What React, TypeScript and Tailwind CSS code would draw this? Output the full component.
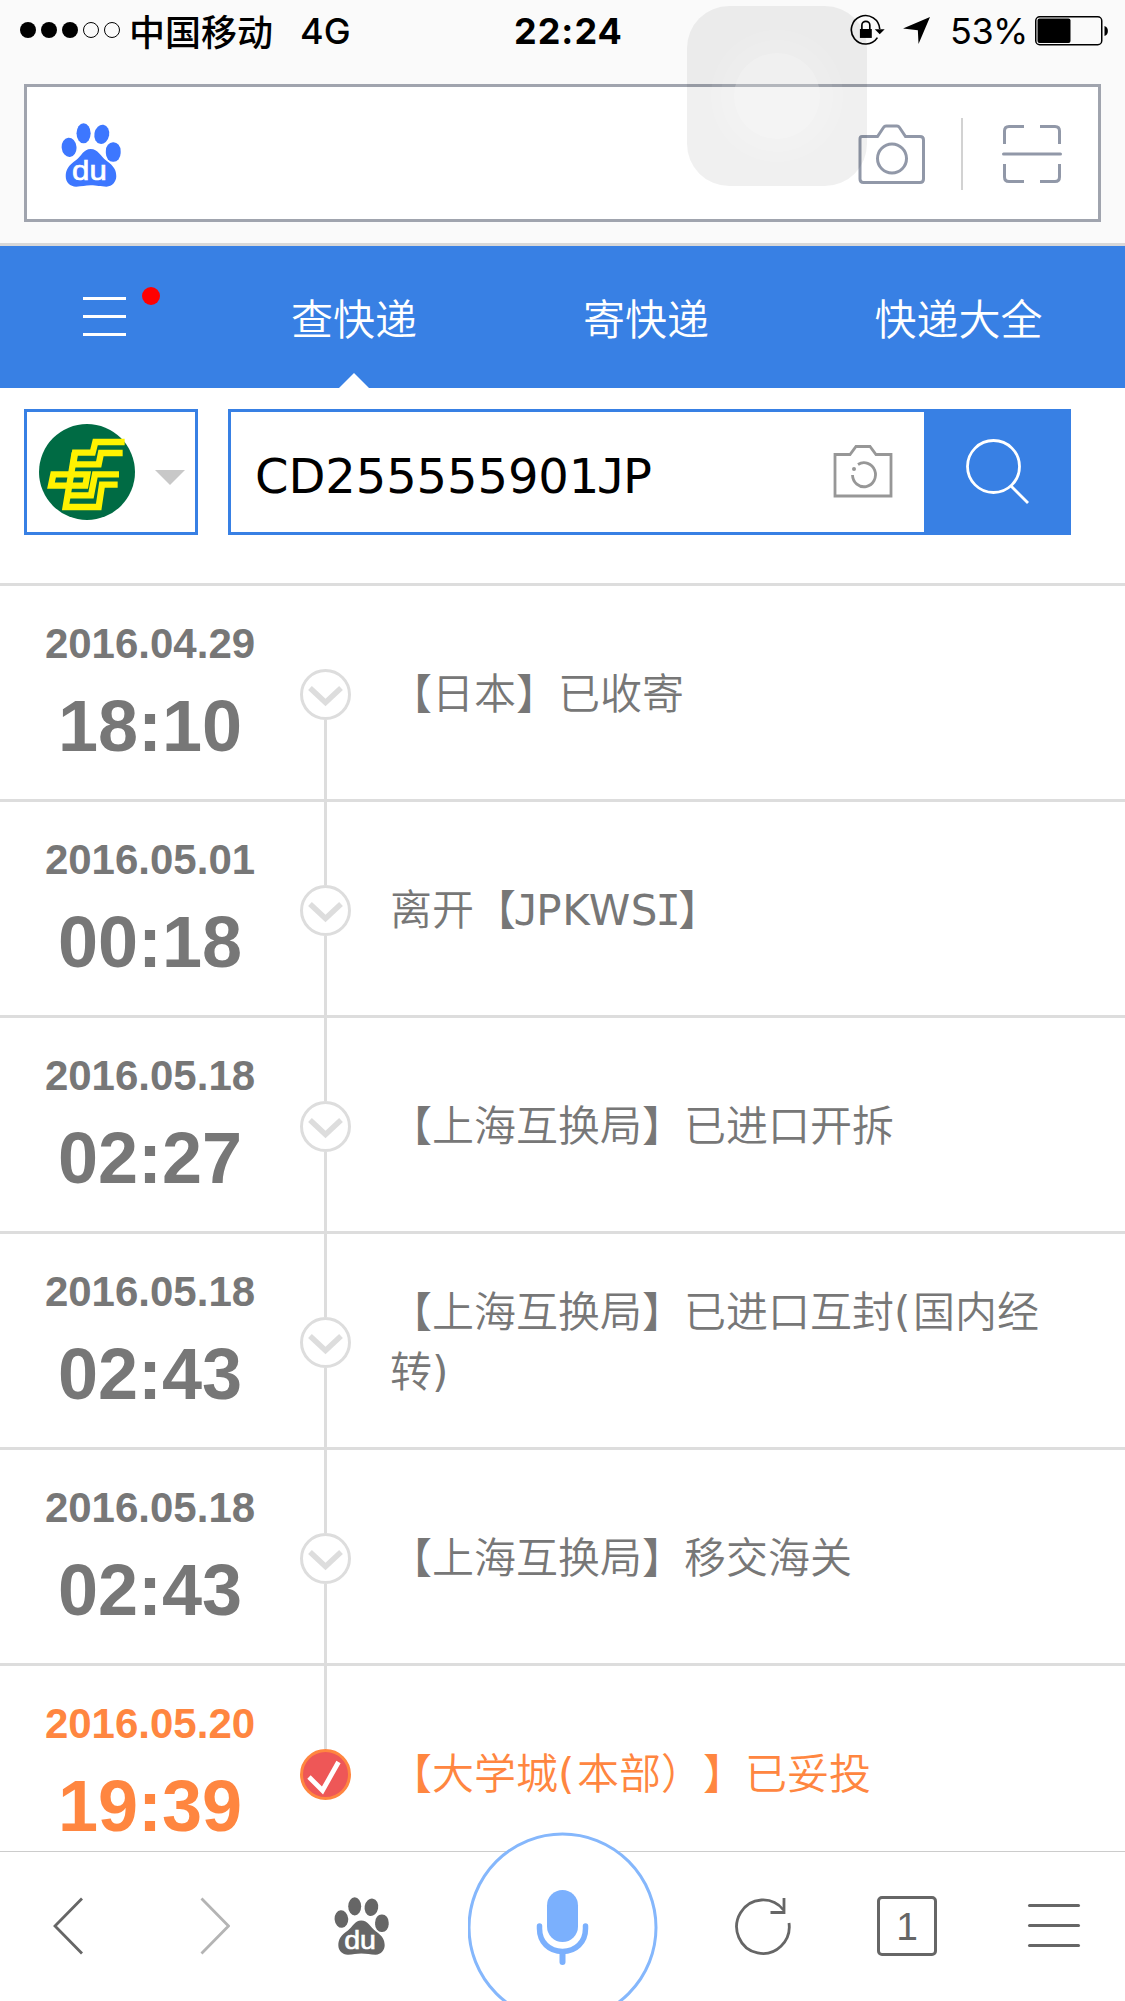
import React from 'react';

interface TrackEvent {
  date: string;
  time: string;
  text: React.ReactNode;
  done?: boolean;
}

// Slab-serif letter, drawn from the monospace face
const Slab: React.FC<{ children: string }> = ({ children }) => (
  <span className="-mx-[2.5px] font-['DejaVu_Sans_Mono',monospace] font-normal">{children}</span>
);

const Latin: React.FC<{ children: string }> = ({ children }) => (
  <span className="font-normal tracking-[0.5px]">{children}</span>
);

const Paren: React.FC<{ children: string }> = ({ children }) => (
  <span className="font-normal tracking-[2.5px]">{children}</span>
);

const events: TrackEvent[] = [
  { date: '2016.04.29', time: '18:10', text: '【日本】已收寄' },
  {
    date: '2016.05.01',
    time: '00:18',
    text: (
      <>
        离开【<Slab>J</Slab>
        <Latin>PKWS</Latin>
        <Slab>I</Slab>】
      </>
    ),
  },
  { date: '2016.05.18', time: '02:27', text: '【上海互换局】已进口开拆' },
  {
    date: '2016.05.18',
    time: '02:43',
    text: (
      <>
        【上海互换局】已进口互封<Paren>(</Paren>国内经
        <br />
        转<Paren>)</Paren>
      </>
    ),
  },
  { date: '2016.05.18', time: '02:43', text: '【上海互换局】移交海关' },
  {
    date: '2016.05.20',
    time: '19:39',
    text: (
      <>
        【大学城<Paren>(</Paren>本部）】已妥投
      </>
    ),
    done: true,
  },
];

const Paw: React.FC<{ className: string }> = ({ className }) => (
  <svg viewBox="33 37 178 192" preserveAspectRatio="none" className={className} fill="currentColor">
    <ellipse cx="57" cy="110" rx="22" ry="29" transform="rotate(-5 57 110)" />
    <ellipse cx="100" cy="68" rx="21" ry="30" />
    <ellipse cx="154" cy="71" rx="22" ry="29" transform="rotate(10 154 71)" />
    <rect x="166" y="95" width="44" height="58" rx="21" ry="26" />
    <path d="M121 115C100 115 93 137 78 148C55 164 47 178 47 197C47 215 60 228 78 228C95 228 105 224 121 224C140 224 150 228 168 228C185 228 197 213 197 197C197 178 190 166 168 150C150 137 143 115 121 115Z" />
    <text
      x="66"
      y="208"
      textLength="103"
      lengthAdjust="spacingAndGlyphs"
      fill="white"
      stroke="white"
      strokeWidth="2"
      className="font-['Liberation_Sans',sans-serif] text-[84px] font-normal"
    >
      du
    </text>
  </svg>
);

const StatusBar: React.FC = () => (
  <div className="flex h-[60px] items-center pl-[20px] pr-[16px] font-['Inter','Noto_Sans_CJK_SC',sans-serif] text-[36px] leading-[60px] text-black">
    <div className="flex w-[494px] items-center">
      <div className="flex gap-[5px]">
        <i className="size-4 rounded-full bg-black" />
        <i className="size-4 rounded-full bg-black" />
        <i className="size-4 rounded-full bg-black" />
        <i className="size-4 rounded-full border border-black" />
        <i className="size-4 rounded-full border border-black" />
      </div>
      <span className="ml-[9px] font-['Noto_Sans_CJK_SC',sans-serif] font-medium">中国移动</span>
      <span className="ml-[27px] pt-[2px] font-medium">4G</span>
    </div>
    <span className="pt-[2px] font-bold tracking-[1px]">22:24</span>
    <div className="ml-auto flex items-center">
      <svg viewBox="30 27 106 96" className="h-8 w-[35px]">
        <path d="M120 72A43 43 0 1 0 113 98" fill="none" stroke="black" strokeWidth="5" />
        <path d="M105 73H135L120 88Z" />
        <rect x="60" y="72" width="36" height="27" />
        <path d="M66 74V60A12 11 0 0 1 90 60V74" fill="none" stroke="black" strokeWidth="5" />
      </svg>
      <svg viewBox="190 39 80 80" className="ml-[18px] size-[27px]">
        <path d="M190 73L270 39L236 119L234 78Z" />
      </svg>
      <span className="ml-[20px] w-[76px] whitespace-nowrap pt-[2px] tracking-[-0.5px]">53%</span>
      <svg viewBox="0 0 74 30" className="ml-[9px] mt-[1px] h-[30px] w-[74px]">
        <rect x="0.75" y="0.75" width="66" height="28" rx="4" fill="none" stroke="black" strokeWidth="1.5" />
        <rect x="2.5" y="2.5" width="33" height="24.5" rx="2" />
        <path d="M69.5 10C74 11 74 19 69.5 20Z" />
      </svg>
    </div>
  </div>
);

const AddressBar: React.FC = () => (
  <div className="mx-6 mt-6 flex h-[138px] items-center border-[3px] border-[#a0a4ae] bg-white pl-[34px] pr-[36px] pt-px">
    <Paw className="h-[64px] w-[60px] translate-y-px text-[#3d77ff]" />
    <svg viewBox="0 0 68 60" className="ml-auto h-[60px] w-[68px]" fill="none" stroke="#9198a8" strokeWidth="3">
      <path d="M4 12.5H19.5L25.5 3.5Q26.5 2 28 2H39Q40.5 2 41.5 3.5L47.5 12.5H62Q65.5 12.5 65.5 16V55Q65.5 58.5 62 58.5H5.5Q2 58.5 2 55V15Q2 12.5 4 12.5Z" />
      <circle cx="34" cy="34.5" r="14.5" />
    </svg>
    <div className="ml-[35px] h-[72px] w-[2px] bg-[#d2d2d2]" />
    <svg viewBox="0 0 60 60" className="ml-[39px] size-[60px]" fill="none" stroke="#9198a8" strokeWidth="3">
      <path d="M2.5 20V7Q2.5 2.5 7 2.5H22M38 2.5H53Q57.5 2.5 57.5 7V20M57.5 40V53Q57.5 57.5 53 57.5H38M22 57.5H7Q2.5 57.5 2.5 53V40" />
      <path d="M1.5 30H58.5" strokeLinecap="round" />
    </svg>
  </div>
);

const NavBar: React.FC = () => (
  <nav className="flex h-[142px] shrink-0 bg-[#3880e4] text-[42px] font-[350] leading-[149px] text-white">
    <div className="flex w-[208px] items-start pl-[83px]">
      <div className="mt-[51px] flex w-[43px] flex-col gap-[15px]">
        <i className="h-[3px] bg-white" />
        <i className="h-[3px] bg-white" />
        <i className="h-[3px] bg-white" />
      </div>
      <i className="ml-4 mt-[41px] size-[18px] rounded-full bg-[#ff0000]" />
    </div>
    <div className="relative w-[292px] text-center">
      查快递
      <svg viewBox="0 0 30 15" className="absolute bottom-0 left-[131px] h-[15px] w-[30px]">
        <path d="M0 15L15 0L30 15Z" fill="white" />
      </svg>
    </div>
    <div className="w-[292px] text-center">寄快递</div>
    <div className="w-[333px] text-center">快递大全</div>
  </nav>
);

const SearchRow: React.FC = () => (
  <div className="flex h-[195px] shrink-0 pl-6 pt-[21px]">
    <div className="flex h-[126px] w-[174px] items-center border-[3px] border-[#3880e4] pl-3">
      <svg viewBox="27 27 288 288" className="size-24">
        <circle cx="171" cy="171" r="144" fill="#006b44" />
        <g fill="none" stroke="#fff200" strokeWidth="19">
          <path d="M284 81H196L188 113H135L130 148H206L213 114H278" />
          <path d="M134 113L107 276H206L216 209H263" />
          <path d="M112 241H183L195 178H267" />
          <path d="M70 178H172L166 212H63Z" />
        </g>
      </svg>
      <svg viewBox="0 0 30 15" className="ml-5 mt-[11px] h-[15px] w-[30px]">
        <path d="M0 0H30L15 15Z" fill="#c8c8c8" />
      </svg>
    </div>
    <div className="ml-[30px] flex h-[126px] w-[696px] items-center border-[3px] border-r-0 border-[#3880e4] pl-[24px] pr-[31px]">
      <span className="whitespace-nowrap pt-[8px] font-['DejaVu_Sans',sans-serif] text-[48px] leading-[60px] tracking-[-0.1px] text-black">
        CD255555901<Slab>J</Slab>P
      </span>
      <svg viewBox="0 0 60 54" className="ml-auto mb-[3px] h-[54px] w-[60px]" fill="none" stroke="#979797" strokeWidth="2.8">
        <path d="M2 10.5H17L23 2.5H37L43 10.5H58V52H2Z" />
        <path d="M25 20.5A11.5 12 0 1 1 19.5 31" />
        <circle cx="21" cy="25" r="2" fill="#979797" stroke="none" />
      </svg>
    </div>
    <div className="flex h-[126px] w-[147px] items-center justify-center bg-[#3880e4]">
      <svg viewBox="0 0 66 66" className="size-[66px] -translate-y-px" fill="none" stroke="white" strokeWidth="2.8">
        <circle cx="28.5" cy="28.5" r="26" />
        <path d="M46 48L63 65" />
      </svg>
    </div>
  </div>
);

const TrackRow: React.FC<{ event: TrackEvent; first: boolean }> = ({ event, first }) => (
  <li className={`flex h-[216px] shrink-0 border-t-[3px] border-[#ddd] ${event.done ? 'text-[#ff8640]' : 'text-[#777]'}`}>
    <div className="w-[300px] pt-[33px] text-center font-['Liberation_Sans',Arial,sans-serif] font-bold">
      <div className="text-[42px] leading-[50px]">{event.date}</div>
      <div className="mt-[17px] text-[72px] leading-[80px]">{event.time}</div>
    </div>
    <div className="flex w-[51px] flex-col items-center">
      <i className={`h-[83px] w-[3px] ${first ? '' : 'bg-[#ddd]'}`} />
      {event.done ? (
        <svg viewBox="0 0 51 51" className="size-[51px] shrink-0" fill="none">
          <circle cx="25.5" cy="25.5" r="24" fill="#ee5757" stroke="#ff8640" strokeWidth="3" />
          <path d="M9 28L22.5 41.5L38.5 13" stroke="white" strokeWidth="4.8" />
        </svg>
      ) : (
        <svg viewBox="0 0 51 51" className="size-[51px] shrink-0" fill="none" stroke="#ddd">
          <circle cx="25.5" cy="25.5" r="24" strokeWidth="3" />
          <path d="M10 19L25.5 33.5L41 19" strokeWidth="5.5" />
        </svg>
      )}
      {!event.done && <i className="w-[3px] grow bg-[#ddd]" />}
    </div>
    <div className="ml-[39px] flex w-[665px] items-center text-[42px] leading-[60px]">
      <p className="pt-[4px]">{event.text}</p>
    </div>
  </li>
);

const Toolbar: React.FC = () => (
  <footer className="flex h-[150px] shrink-0 border-t border-[#ccc] bg-white text-[#666]">
    <svg viewBox="0 0 30 58" className="ml-[53px] mt-[45px] h-[58px] w-[30px]" fill="none" stroke="#666" strokeWidth="2.8">
      <path d="M29 1.5L2 29L29 56.5" />
    </svg>
    <svg viewBox="0 0 30 58" className="ml-[117px] mt-[45px] h-[58px] w-[30px]" fill="none" stroke="#b4b4b4" strokeWidth="2.8">
      <path d="M1.5 1.5L28.5 29L1.5 56.5" />
    </svg>
    <Paw className="ml-[104px] mt-[45px] h-[58px] w-[55px] text-[#666]" />
    <svg viewBox="0 0 190 190" className="-mt-[20px] ml-[79px] size-[190px] shrink-0" fill="none">
      <circle cx="94.5" cy="95.5" r="93.5" fill="white" stroke="#85b7fc" strokeWidth="3" />
      <rect x="79" y="58" width="31" height="52" rx="15.5" fill="#7bb0fd" />
      <path d="M71.5 94V96.5C71.5 110 81 119.5 94.5 119.5C108 119.5 117.5 110 117.5 96.5V94" stroke="#7bb0fd" strokeWidth="5.5" strokeLinecap="round" />
      <path d="M94.5 120V130" stroke="#7bb0fd" strokeWidth="6" strokeLinecap="round" />
    </svg>
    <svg viewBox="0 0 58 60" className="ml-[77px] mt-[44px] h-[60px] w-[58px]" fill="none" stroke="#666" strokeWidth="2.8">
      <path d="M54 27A26.3 26.8 0 1 1 48.5 14" />
      <path d="M49 2V16.5H35.5" />
    </svg>
    <div className="ml-[84px] mt-[44px] flex h-[60px] w-[60px] items-center justify-center rounded-[5px] border-[3px] border-[#666] font-['Liberation_Sans',Arial,sans-serif] text-[39px] leading-none">
      1
    </div>
    <div className="ml-[91px] mt-[52px] flex w-[52px] flex-col gap-[17px]">
      <i className="h-[3px] rounded-full bg-[#666]" />
      <i className="h-[3px] rounded-full bg-[#666]" />
      <i className="h-[3px] rounded-full bg-[#666]" />
    </div>
  </footer>
);

// Floating AssistiveTouch button
const TouchButton: React.FC = () => (
  <div className="pointer-events-none absolute left-[687px] top-[6px] flex size-[180px] items-center justify-center rounded-[42px] bg-black/6">
    <div className="flex size-[132px] items-center justify-center rounded-full bg-white/5">
      <div className="flex size-[112px] items-center justify-center rounded-full bg-white/5">
        <div className="size-[86px] rounded-full bg-white/20" />
      </div>
    </div>
  </div>
);

export default function App() {
  return (
    <div className="relative flex h-[2001px] w-[1125px] flex-col overflow-hidden bg-white font-['DejaVu_Sans','Noto_Sans_CJK_SC',sans-serif] [text-spacing-trim:space-all]">
      <header className="h-[246px] shrink-0 border-b-[3px] border-[#d8d8d8] bg-[#fafafa]">
        <StatusBar />
        <AddressBar />
      </header>
      <NavBar />
      <SearchRow />
      <ul className="flex h-[1268px] shrink-0 flex-col overflow-hidden font-[350]">
        {events.map((event, i) => (
          <TrackRow key={i} event={event} first={i === 0} />
        ))}
      </ul>
      <Toolbar />
      <TouchButton />
    </div>
  );
}
